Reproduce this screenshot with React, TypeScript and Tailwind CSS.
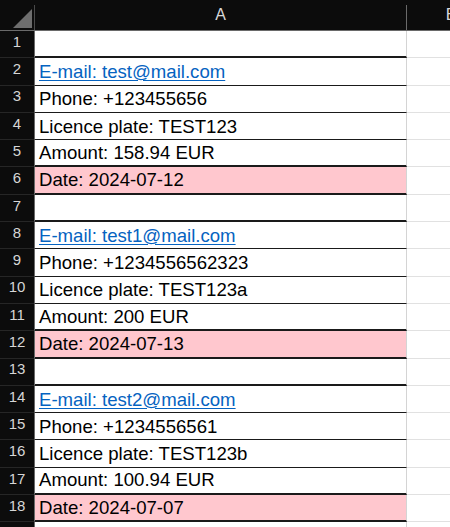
const ROWS: { text: string; kind: 'empty' | 'link' | 'plain' | 'date'; bottom: 'thick' | 'thin' }[] = [];

const GROUPS = [
  { email: 'test@mail.com', phone: '+123455656', plate: 'TEST123', amount: '158.94 EUR', date: '2024-07-12' },
  { email: 'test1@mail.com', phone: '+1234556562323', plate: 'TEST123a', amount: '200 EUR', date: '2024-07-13' },
  { email: 'test2@mail.com', phone: '+1234556561', plate: 'TEST123b', amount: '100.94 EUR', date: '2024-07-07' },
];

GROUPS.forEach((g) => {
  ROWS.push({ text: '', kind: 'empty', bottom: 'thick' });
  ROWS.push({ text: `E-mail: ${g.email}`, kind: 'link', bottom: 'thin' });
  ROWS.push({ text: `Phone: ${g.phone}`, kind: 'plain', bottom: 'thin' });
  ROWS.push({ text: `Licence plate: ${g.plate}`, kind: 'plain', bottom: 'thin' });
  ROWS.push({ text: `Amount: ${g.amount}`, kind: 'plain', bottom: 'thick' });
  ROWS.push({ text: `Date: ${g.date}`, kind: 'date', bottom: 'thick' });
});
ROWS.push({ text: '', kind: 'empty', bottom: 'thin' });

const cellFont = { fontFamily: '"Liberation Sans", Arial, sans-serif' };

export default function App() {
  return (
    <div className="w-[450px] h-[527px] overflow-hidden bg-white select-none" style={cellFont}>
      {/* column headers */}
      <div className="flex h-[31px] bg-[#0c0c0c] border-b border-[#6a6a6a]">
        <div className="w-[35px] shrink-0 relative border-r border-[#4a4a4a] mt-[5px]">
          <svg className="absolute left-[13px] top-[4px]" width="20" height="19" viewBox="0 0 20 19">
            <polygon points="19,0 19,19 0,19" fill="#6e6e6e" />
          </svg>
        </div>
        <div className="w-[372px] shrink-0 flex items-center justify-center text-[16px] text-[#d8d8d8] border-r border-[#6a6a6a] mt-[5px] pb-[5px]">
          A
        </div>
        <div className="w-[88px] shrink-0 flex items-center justify-center text-[16px] text-[#d8d8d8] mt-[5px] pb-[5px]">
          B
        </div>
      </div>

      {ROWS.map((r, i) => (
        <div key={i} className="flex h-[27.3px]">
          <div className="w-[35px] shrink-0 bg-[#0c0c0c] border-r border-[#6a6a6a] border-b border-b-[#262626] flex items-end justify-center pb-[4px] text-[15px] text-[#d6d6d6]">
            {i + 1}
          </div>
          <div
            className={`w-[372px] shrink-0 border-r border-r-[#d4d4d4] flex items-end pl-[4px] pb-[3px] text-[18.6px] leading-none whitespace-nowrap ${
              r.kind === 'date' ? 'bg-[#ffc7ce]' : 'bg-white'
            } ${r.bottom === 'thick' ? 'border-b-2 border-b-[#1a1a1a]' : 'border-b border-b-[#1a1a1a]'}`}
          >
            {r.kind === 'link' ? (
              <span className="text-[#0563c1] underline underline-offset-2 decoration-1">{r.text}</span>
            ) : (
              <span className="text-black">{r.text}</span>
            )}
          </div>
          <div className="w-[88px] shrink-0 bg-white border-b border-b-[#e1e1e1]" />
        </div>
      ))}
    </div>
  );
}
